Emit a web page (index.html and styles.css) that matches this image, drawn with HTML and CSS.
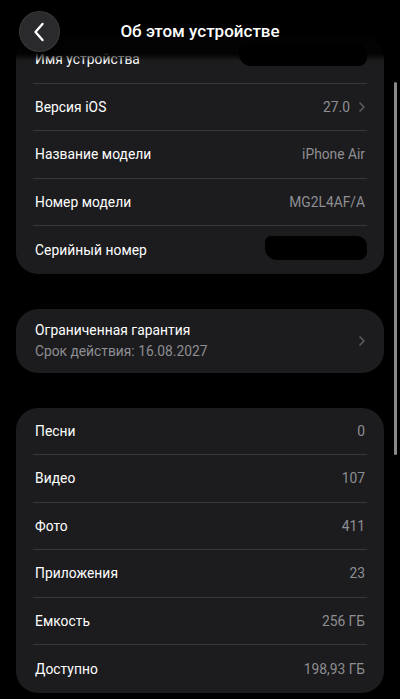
FILE: index.html
```html
<!DOCTYPE html>
<html lang="ru">
<head>
<meta charset="utf-8">
<link rel="stylesheet" href="styles.css">
</head>
<body>
<div class="screen">
  <div class="content">
    <section class="card">
      <div class="row"><span class="label">Имя устройства</span><span class="blob blob-name"></span></div>
      <div class="row"><span class="label">Версия iOS</span><span class="value">27.0<svg class="chev" viewBox="0 0 6 10"><path d="M1 1l4 4-4 4"/></svg></span></div>
      <div class="row"><span class="label">Название модели</span><span class="value">iPhone Air</span></div>
      <div class="row"><span class="label">Номер модели</span><span class="value">MG2L4AF/A</span></div>
      <div class="row"><span class="label">Серийный номер</span><span class="blob blob-serial"></span></div>
    </section>

    <section class="card warranty">
      <div class="wtext">
        <span class="label">Ограниченная гарантия</span>
        <span class="sub">Срок действия: 16.08.2027</span>
      </div>
      <svg class="chev" viewBox="0 0 6 10"><path d="M1 1l4 4-4 4"/></svg>
    </section>

    <section class="card">
      <div class="row"><span class="label">Песни</span><span class="value">0</span></div>
      <div class="row"><span class="label">Видео</span><span class="value">107</span></div>
      <div class="row"><span class="label">Фото</span><span class="value">411</span></div>
      <div class="row"><span class="label">Приложения</span><span class="value">23</span></div>
      <div class="row"><span class="label">Емкость</span><span class="value">256 ГБ</span></div>
      <div class="row"><span class="label">Доступно</span><span class="value">198,93 ГБ</span></div>
    </section>
  </div>

  <header class="topbar">
    <button class="back" aria-label="Назад">
      <svg viewBox="0 0 12 20"><path d="M9.5 2L2.5 10l7 8"/></svg>
    </button>
    <h1 class="title">Об этом устройстве</h1>
  </header>

  <div class="scrollbar"></div>
</div>
</body>
</html>
```

FILE: styles.css
```css
* { box-sizing: border-box; }
html, body { margin: 0; padding: 0; background: #000; }
body {
  font-family: Roboto, "Noto Sans", "Liberation Sans", sans-serif;
  color: #fff;
  -webkit-font-smoothing: antialiased;
}
.screen {
  position: relative;
  width: 400px;
  height: 699px;
  overflow: hidden;
  background: #000;
}
.content {
  display: flex;
  flex-direction: column;
  gap: 35px;
  padding: 36px 16px 0;
}
.card {
  background: #1c1c1e;
  border-radius: 22px;
  padding: 0 17px;
}
.row {
  height: 47.5px;
  display: flex;
  align-items: center;
  justify-content: space-between;
  padding: 0 2px;
  border-bottom: 1px solid #38383a;
}
.row:last-child { border-bottom: none; }
.label {
  font-size: 13.8px;
  color: #fff;
  letter-spacing: 0.05px;
}
.value {
  font-size: 13.8px;
  color: #8e8e93;
  display: flex;
  align-items: center;
  gap: 9px;
}
.chev {
  width: 6px;
  height: 10px;
  fill: none;
  stroke: #5c5c60;
  stroke-width: 1.6;
  stroke-linecap: round;
  stroke-linejoin: round;
}
.blob {
  display: block;
  background: #000;
  border-radius: 6px 10px 8px 12px;
  filter: blur(0.6px);
}
.blob-name { width: 128px; height: 22px; margin-top: -8px; margin-right: -2px; }
.blob-serial { width: 102px; height: 24px; margin-top: -4px; margin-right: -2px; }

.warranty {
  height: 64px;
  display: flex;
  align-items: center;
  justify-content: space-between;
  padding: 0 19px;
}
.wtext {
  display: flex;
  flex-direction: column;
  gap: 5px;
}
.sub {
  font-size: 13.8px;
  color: #8e8e93;
}

.topbar {
  position: absolute;
  left: 0; top: 0;
  width: 400px;
  height: 61px;
  background: linear-gradient(to bottom, rgba(0,0,0,0.95) 0%, rgba(0,0,0,0.9) 88%, rgba(0,0,0,0.4) 95%, rgba(0,0,0,0) 100%);
}
.back {
  position: absolute;
  left: 19px;
  top: 11px;
  width: 41px;
  height: 41px;
  border-radius: 50%;
  border: 1px solid rgba(255,255,255,0.08);
  background: #2a2a2c;
  display: flex;
  align-items: center;
  justify-content: center;
  padding: 0;
  box-shadow: 0 0 6px rgba(0,0,0,0.6);
}
.back svg {
  width: 12px;
  height: 20px;
  fill: none;
  stroke: #fff;
  stroke-width: 2.4;
  stroke-linecap: round;
  stroke-linejoin: round;
  margin-left: -2px;
}
.title {
  position: absolute;
  left: 0; right: 0;
  top: 20px;
  margin: 0;
  text-align: center;
  font-size: 17px;
  font-weight: 500;
  line-height: 22px;
  pointer-events: none;
}
.scrollbar {
  position: absolute;
  left: 394px;
  top: 82px;
  width: 3px;
  height: 373px;
  border-radius: 2px;
  background: #8a8a8c;
}
```
